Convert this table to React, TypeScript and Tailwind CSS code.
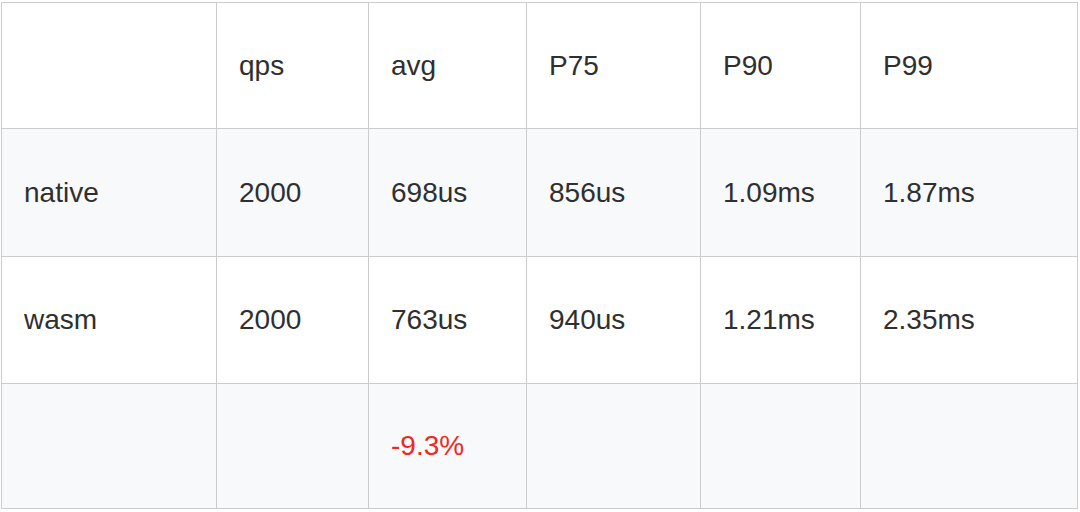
const header = ['', 'qps', 'avg', 'P75', 'P90', 'P99']

const rows: { cells: string[]; height: string; striped: boolean }[] = [
  { cells: ['native', '2000', '698us', '856us', '1.09ms', '1.87ms'], height: 'h-[128px]', striped: true },
  { cells: ['wasm', '2000', '763us', '940us', '1.21ms', '2.35ms'], height: 'h-[127px]', striped: false },
  { cells: ['', '', '-9.3%', '', '', ''], height: 'h-[125px]', striped: true },
]

const widths = ['w-[215px]', 'w-[152px]', 'w-[158px]', 'w-[174px]', 'w-[160px]', 'w-[217px]']

export default function App() {
  return (
    <div className="w-[1080px] h-[512px] bg-white pt-[2px] pl-[1px] overflow-hidden">
      <table
        className="table-fixed border-collapse w-[1077px] text-[#2f2f2f] text-[28px]"
        style={{ fontFamily: '"Liberation Sans", Arial, sans-serif' }}
      >
        <colgroup>
          {widths.map((w, i) => (
            <col key={i} className={w} />
          ))}
        </colgroup>
        <thead>
          <tr className="h-[126px] bg-white">
            {header.map((h, i) => (
              <th key={i} className="border border-[#cccccc] px-[22px] text-left font-normal">
                {h}
              </th>
            ))}
          </tr>
        </thead>
        <tbody>
          {rows.map((row, r) => (
            <tr key={r} className={`${row.height} ${row.striped ? 'bg-[#f8f9fb]' : 'bg-white'}`}>
              {row.cells.map((c, i) => (
                <td
                  key={i}
                  className={`border border-[#cccccc] px-[22px] text-left ${c.startsWith('-') ? 'text-[#ee2a1f]' : ''}`}
                >
                  {c}
                </td>
              ))}
            </tr>
          ))}
        </tbody>
      </table>
    </div>
  )
}
